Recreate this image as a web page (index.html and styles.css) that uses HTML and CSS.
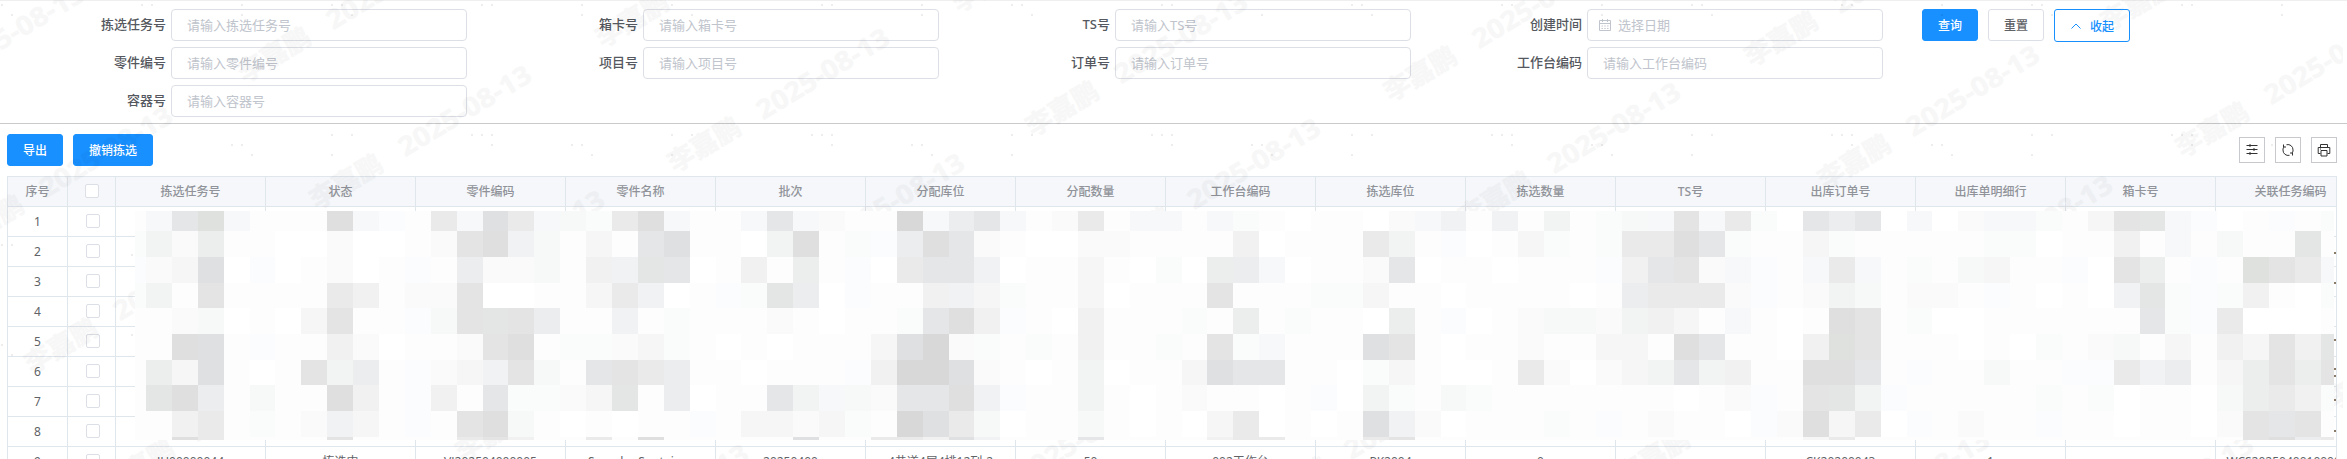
FILE: index.html
```
<!DOCTYPE html>
<html lang="zh-CN">
<head>
<meta charset="utf-8">
<title>拣选任务</title>
<link rel="stylesheet" href="styles.css">
</head>
<body>
<main class="page">
  <form class="search">
    <div class="fields">
      <div class="item"><label class="label">拣选任务号</label><div class="input">请输入拣选任务号</div></div>
      <div class="item"><label class="label">箱卡号</label><div class="input">请输入箱卡号</div></div>
      <div class="item"><label class="label">TS号</label><div class="input">请输入TS号</div></div>
      <div class="item"><label class="label">创建时间</label><div class="input input-date"><svg class="cal" viewBox="0 0 14 14"><path d="M1.500 2.500h11v10h-11zM1.500 5.500h11M4.500 1v3M9.500 1v3M3.500 8h1.400M6.300 8h1.400M9.100 8h1.400M3.500 10.500h1.400M6.300 10.500h1.400M9.100 10.500h1.400"/></svg>选择日期</div></div>
      <div class="item"><label class="label">零件编号</label><div class="input">请输入零件编号</div></div>
      <div class="item"><label class="label">项目号</label><div class="input">请输入项目号</div></div>
      <div class="item"><label class="label">订单号</label><div class="input">请输入订单号</div></div>
      <div class="item"><label class="label">工作台编码</label><div class="input">请输入工作台编码</div></div>
      <div class="item"><label class="label">容器号</label><div class="input">请输入容器号</div></div>
    </div>
    <div class="actions">
      <button type="button" class="btn btn-primary">查询</button>
      <button type="button" class="btn">重置</button>
      <button type="button" class="btn btn-outline"><svg class="chev" viewBox="0 0 12 12"><path d="M1.500 8.500L6 4l4.500 4.500"/></svg>收起</button>
    </div>
  </form>
  <div class="toolbar">
    <button type="button" class="btn btn-primary">导出</button>
    <button type="button" class="btn btn-primary btn-wide">撤销拣选</button>
    <div class="tools">
      <span class="tool"><svg viewBox="0 0 14 14"><path d="M1.500 2.500h11M1.500 6.500h11M1.500 10.500h11M5 1v3M9 5v3M5 9v3"/></svg></span>
      <span class="tool"><svg viewBox="0 0 14 14"><path d="M5.500 1.700A5.200 5.200 0 0 1 12 7v1M8.500 12.300A5.200 5.200 0 0 1 2 7V6M3 3.800A5 5 0 0 0 2 6M11 10.200A5 5 0 0 0 12 8M2.500 1.500v2.500H5M11.500 12.500V10H9"/></svg></span>
      <span class="tool"><svg viewBox="0 0 14 14"><path d="M3.500 4.500V1.500h7v3M3.500 10.500H1.200v-6h11.600v6h-2.300M4 7.500h6v5.500H4zM3 6h1"/></svg></span>
    </div>
  </div>
  <div class="table" id="table"></div>
</main>
<svg class="overlay" id="watermark" width="2347" height="459"></svg>
<svg class="overlay" id="mosaic" width="2347" height="459" shape-rendering="crispEdges"></svg>
<script src="main.js"></script>
</body>
</html>
```
FILE: styles.css
```
* { box-sizing: border-box; }
body {
  margin: 0;
  width: 2347px;
  height: 459px;
  overflow: hidden;
  background: #fff;
  color: #606266;
  font-family: "Noto Sans", "Noto Sans CJK SC", sans-serif;
  font-size: 12px;
}
.page { height: 459px; overflow: hidden; border-top: 1px solid #efeff0; }
.search { display: flex; height: 123px; padding-top: 8px; border-bottom: 1px solid #c9cacc; }
.fields { display: grid; grid-template-columns: repeat(4, 472px); grid-auto-rows: 32px; row-gap: 6px; }
.item { display: flex; gap: 5px; }
.label { width: 166px; text-align: right; font-size: 13px; font-weight: 500; line-height: 30px; color: #55585e; }
.input { display: flex; align-items: center; width: 296px; height: 32px; padding: 0 15px 1px; border: 1px solid #dcdfe6; border-radius: 4px; font-size: 13px; color: #c0c4cc; }
.input-date { padding-left: 10px; gap: 6px; }
.cal { width: 14px; height: 14px; fill: none; stroke: #c0c4cc; stroke-width: 1; }
.actions { display: flex; align-items: flex-start; gap: 10px; padding-left: 34px; }
.btn { display: flex; align-items: center; justify-content: center; width: 56px; height: 32px; padding: 0; border: 1px solid #dcdfe6; border-radius: 3px; background: #fff; color: #606266; font: 500 12px "Noto Sans", "Noto Sans CJK SC", sans-serif; }
.btn-primary { border-color: #1890ff; background: #1890ff; color: #fff; }
.btn-wide { width: 80px; }
.btn-outline { width: 76px; height: 33px; gap: 8px; border-color: #1890ff; color: #1890ff; }
.chev { width: 12px; height: 12px; fill: none; stroke: #1890ff; stroke-width: 1; }
.toolbar { display: flex; align-items: center; gap: 10px; height: 52px; padding: 0 10px 0 7px; }
.tools { display: flex; gap: 10px; margin-left: auto; }
.tool { display: flex; align-items: center; justify-content: center; width: 26px; height: 26px; border: 1px solid #c8c9cc; }
.tool svg { width: 14px; height: 14px; fill: none; stroke: #333; stroke-width: 1; }
.table { width: 2330px; height: 290px; margin-left: 7px; overflow: hidden; border: 1px solid #dfe6ec; }
.row { display: grid; grid-template-columns: 60px 48px repeat(15, 150px); height: 30px; width: 2358px; }
.cell { display: flex; align-items: center; justify-content: center; height: 30px; padding-bottom: 1px; border-right: 1px solid #dfe6ec; border-bottom: 1px solid #dfe6ec; white-space: nowrap; }
.head .cell { background: #f5f7fa; color: #909399; font-weight: 500; }
.check { width: 14px; height: 14px; border: 1px solid #dcdfe6; border-radius: 2px; background: #fff; }
.row:not(.head) .check { margin-left: 2px; }
.overlay { position: absolute; left: 0; top: 0; pointer-events: none; }
.mark { font: 700 26.500px "Noto Sans", "Noto Sans CJK SC", sans-serif; fill: #000; stroke: #000; stroke-width: .6px; opacity: .028; }
```
FILE: main.js
```
const titles = ['拣选任务号', '状态', '零件编码', '零件名称', '批次', '分配库位', '分配数量', '工作台编码', '拣选库位', '拣选数量', 'TS号', '出库订单号', '出库单明细行', '箱卡号', '关联任务编码'];
const lastRow = ['JH00000044', '拣选中', 'VJ202504000005', 'Soander Sontainer', '20250400', '4巷道4层4排12列-2', '50', '002工作台', 'PK2004', '0', '', 'CK20200043', '1', '', 'WCS202504001000000'];

const row = (first, values, cls) => `<div class="row ${cls}"><div class="cell">${first}</div><div class="cell"><span class="check"></span></div>${values.map(v => `<div class="cell">${v}</div>`).join('')}</div>`;
let html = row('序号', titles, 'head');
for (let i = 1; i <= 8; i++) html += row(i, titles.map(() => ''), '');
html += row(9, lastRow, '');
document.getElementById('table').innerHTML = html;

// Watermark: slanted name and date, anchored at the centre of the first glyph
const marks = [[251,68],[323,195],[-36,236],[-124,114],[609,33],[681,158],[1039,122],[1397,87],[1112,248],[756,283],[1472,212],[1758,52],[1831,175],[2114,17],[2189,143],[1904,305],[396,320],[38,359],[115,480],[469,447],[941,522],[540,574],[1269,498],[1630,470],[1781,560],[2045,565],[2340,395],[965,-2]];
// Faint dots by line: y -> x positions
const dots = {
  5: [2,142,152,242,332,342,482,492,582,672,822,832,922,1012,1022,1162,1172,1352,1362,1502,1512,1602,1692,1702,1842,1852,1942,2032,2042,2182,2192,2282],
  15: [12,242,352,582,692,922,1032,1262,1372,1602,1712,1942,2052,2282],
  135: [332,352,472,482,492,672,692,812,822,832,1012,1032,1152,1162,1172,1352,1372,1492,1502,1512,1692,1712,1832,1842,1852,2032,2052,2172,2182,2192],
  145: [232,242,492,572,582,832,912,922,1172,1252,1262,1512,1592,1602,1852,1932,1942,2192,2272],
  155: [252,332,592,672,932,1012,1272,1352,1612,1692,1952,2032],
  245: [2,12], 255: [132], 335: [132], 345: [2], 355: [12]
};
let wm = '<svg width="2343" height="459">';
for (const [x, y] of marks) wm += `<g transform="translate(${x} ${y}) rotate(-31)"><text class="mark" x="-13" y="10">李嘉鹏</text><text class="mark" x="90" y="10" textLength="150" lengthAdjust="spacingAndGlyphs">2025-08-13</text></g>`;
wm += '</svg>';
for (const y in dots) for (const x of dots[y]) wm += `<rect x="${x - 1}" y="${y - 1}" width="2" height="2" fill="#000" fill-opacity=".07"/>`;
document.getElementById('watermark').innerHTML = wm;

// Pixelated cover over the data cells, one character per tile
const palette = { '0':'#ffffff','.':'#fdfdfd','1':'#fafafa','2':'#f6f6f6','3':'#f1f1f1','4':'#eaeaea','5':'#e4e4e4','6':'#dfdfdf','7':'#d8d8d8', a:'#fbfcfe', b:'#f7f8fa', c:'#f0f2f4', d:'#ebedef', e:'#e5e6e8', f:'#dfe0e2', g:'#fafcfb', h:'#f6f9f8', i:'#f1f4f3', j:'#ebeeed', k:'#e4e6e5', l:'#dfe1df' };
const tiles = [
  '.belb...6ba.4bf4bhg46b..beb1..7bdeb.14.bb.bg.0..01bc.c.i.ghb5b4g0ede0b01bbg.25kba0.a.g',
  'gi1j..00100.156ch.2.ef..0i6.gad6e1.0011....30...4i.a0.2g.g446eg..2g.....gg0..3.b.h..k.',
  'a12f0a0.10.a.d11h.3cke0.3.j.a04eec0..2.0g0jdb0..1e0..0...a3e51ba.b4b.g.h2..a05j.a.l54b',
  'gi.5....43.11500..24c0.agkd0a..3c2g..20...5...gg2..0....0.d4441a.1ih.11.a.0.0ckgag3.0g',
  '..1h0.025..ah5k5d..c.g...1.0..ge63a.03...g.j.g..0j.a0.1hh1i32.b.0.65.g00......ega4000.',
  '..6f.a..310..156.gg12g.0.0...2f71g.g.3..g.5gb...f5.0..1..22.6e..03l5...0.0g.1h.2.3253k',
  '.j2f.0.5id.a12c5h.e54d..0...a377f1.0.i0..2fee..0g2.00.41012iei3..66e.a..h..aa4cd.2j5j5',
  '.k6d.h..63.a3.egg12k.d0..eibh1ee6ca..i.0.1..0.a0ig.hg.......0.1a.5kia.....g.g0..0hj43g',
  '..34.g.1c2.a.56h.0.0..a.2212g.7f4h0..h.0.0240.0.fc10...g.a.1..0a16240a.1..a..0..015e5.',
  '..64....5....453..4.6.....f..443fc...e....344...45...............24...............56d4'
];
const ys = [211, 231, 257, 283, 308, 334, 360, 385, 411, 437, 440];
const tileX = k => k === 0 ? 135 : k > 85 ? 2334 : Math.round(146 + 25.89 * (k - 1));
let out = '';
tiles.forEach((line, r) => {
  for (let k = 0; k < 86; k++) out += `<rect x="${tileX(k)}" y="${ys[r]}" width="${tileX(k + 1) - tileX(k)}" height="${ys[r + 1] - ys[r]}" fill="${palette[line[k]] || '#fdfdfd'}"/>`;
});
// Ends of the text in the last column that stay visible beside the cover
for (const y of [252, 282, 339, 368, 375, 399, 430]) out += `<rect x="2334" y="${y}" width="2" height="2" fill="#8c7a68"/>`;
document.getElementById('mosaic').innerHTML = out;
```
